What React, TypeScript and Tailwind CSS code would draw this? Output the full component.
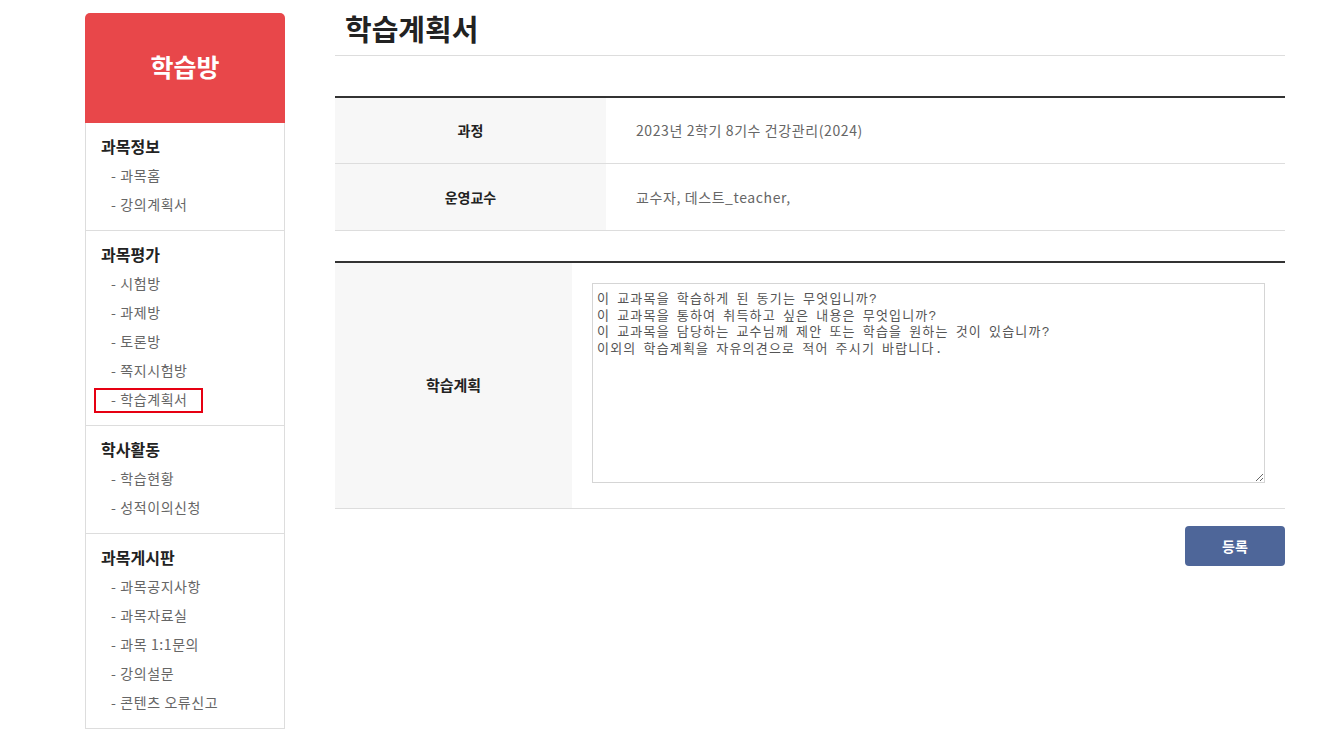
import React from "react";

const FONT = { fontFamily: '"Noto Sans CJK KR", "Noto Sans", sans-serif' };

type Section = { title: string; items: string[] };

const sections: Section[] = [
  { title: "과목정보", items: ["과목홈", "강의계획서"] },
  { title: "과목평가", items: ["시험방", "과제방", "토론방", "쪽지시험방", "학습계획서"] },
  { title: "학사활동", items: ["학습현황", "성적이의신청"] },
  { title: "과목게시판", items: ["과목공지사항", "과목자료실", "과목 1:1문의", "강의설문", "콘텐츠 오류신고"] },
];

function Sidebar() {
  return (
    <aside className="w-[200px] shrink-0">
      <div className="h-[110px] rounded-t-[5px] bg-[#e8474a] flex items-center justify-center pb-[4px]">
        <span className="text-white text-[25px] font-bold leading-none">학습방</span>
      </div>
      <div className="border border-t-0 border-[#dddddd]">
        {sections.map((s, i) => (
          <div
            key={s.title}
            className={`pt-[11px] pb-[11px] ${i > 0 ? "border-t border-[#dddddd]" : ""}`}
          >
            <div className="h-[27px] pl-[15px] pb-[4px] flex items-center text-[16px] font-bold text-[#222222]">
              {s.title}
            </div>
            {s.items.map((it) => (
              <div
                key={it}
                className="relative h-[29px] pl-[25px] flex items-center text-[14px] tracking-[0.6px] text-[#666666]"
              >
                - {it}
                {s.title === "과목평가" && it === "학습계획서" && (
                  <span className="absolute left-[8px] top-[3px] w-[109px] h-[25px] border-2 border-[#e60012]" />
                )}
              </div>
            ))}
          </div>
        ))}
      </div>
    </aside>
  );
}

function Main() {
  return (
    <main className="flex-1 min-w-0">
      <div className="pt-[10px] pb-[9px] pl-[10px] border-b border-[#dddddd]">
        <h1 className="text-[29px] leading-[36px] font-bold text-[#222222]">학습계획서</h1>
      </div>

      <div className="mt-[40px] border-t-2 border-[#333333]">
        <div className="flex h-[66px] border-b border-[#dddddd]">
          <div className="w-[271px] bg-[#f7f7f7] flex items-center justify-center text-[14px] font-bold text-[#222222]">
            과정
          </div>
          <div className="flex-1 flex items-center pl-[30px] text-[14px] tracking-[0.6px] text-[#666666]">
            2023년 2학기 8기수 건강관리(2024)
          </div>
        </div>
        <div className="flex h-[67px] border-b border-[#dddddd]">
          <div className="w-[271px] bg-[#f7f7f7] flex items-center justify-center text-[14px] font-bold text-[#222222]">
            운영교수
          </div>
          <div className="flex-1 flex items-center pl-[30px] text-[14px] tracking-[0.6px] text-[#666666]">
            교수자, 데스트_teacher,
          </div>
        </div>
      </div>

      <div className="mt-[30px] border-t-2 border-[#333333]">
        <div className="flex border-b border-[#dddddd]">
          <div className="w-[237px] bg-[#f7f7f7] flex items-center justify-center text-[15px] font-bold text-[#222222]">
            학습계획
          </div>
          <div className="flex-1 pt-[20px] pr-[20px] pl-[20px] pb-[25px]">
            <textarea
              className="block w-full h-[200px] border border-[#d5d5d5] pl-[4px] pr-[4px] pt-[8px] pb-[5px] text-[13px] leading-[16.7px] tracking-[1.2px] [word-spacing:-2px] text-[#555555] outline-none"
              style={{ fontFamily: '"Liberation Mono", "Noto Sans CJK KR", monospace' }}
              defaultValue={
                "이 교과목을 학습하게 된 동기는 무엇입니까?\n이 교과목을 통하여 취득하고 싶은 내용은 무엇입니까?\n이 교과목을 담당하는 교수님께 제안 또는 학습을 원하는 것이 있습니까?\n이외의 학습계획을 자유의견으로 적어 주시기 바랍니다."
              }
            />
          </div>
        </div>
      </div>

      <div className="flex justify-end mt-[17px]">
        <button className="w-[100px] h-[40px] rounded-[4px] bg-[#4e6699] text-white text-[14px] font-bold">
          등록
        </button>
      </div>
    </main>
  );
}

export default function App() {
  return (
    <div className="min-h-screen bg-white" style={FONT}>
      <div className="flex gap-[50px] pl-[85px] pt-[13px] w-[1285px] pb-[10px]">
        <Sidebar />
        <div className="flex-1 -mt-[13px]">
          <Main />
        </div>
      </div>
    </div>
  );
}
